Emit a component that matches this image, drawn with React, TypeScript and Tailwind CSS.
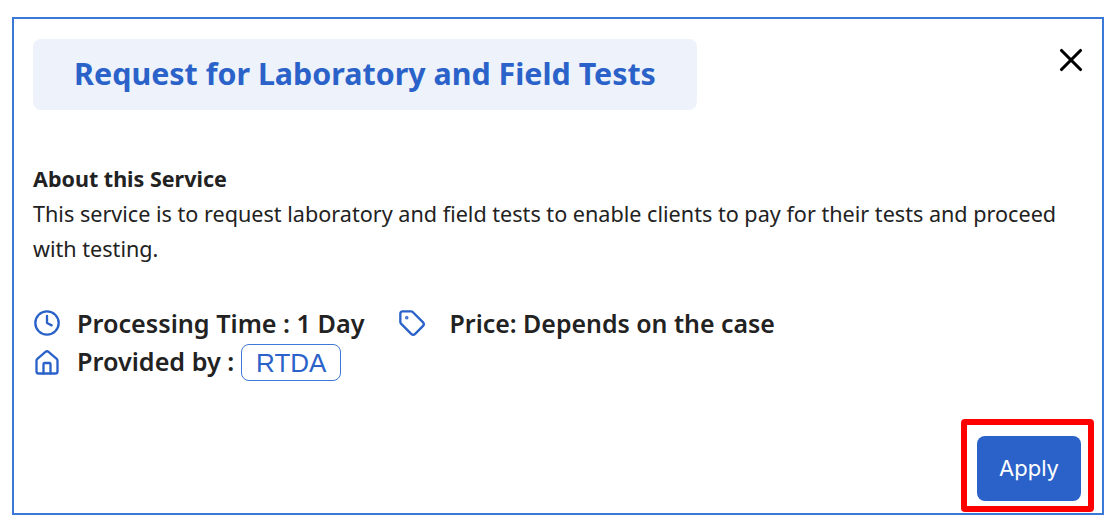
import { X, Clock, Tag, Home } from 'lucide-react';

export default function App() {
  return (
    <div className="w-[1110px] h-[524px] bg-white pl-3 pt-[17px] font-['Noto_Sans',sans-serif] text-[#222222]">
      <div className="relative w-[1092px] h-[498px] border-2 border-[#3b78d8] pl-[19px] pr-4 pt-5">
        <div className="flex items-start justify-between">
          <div className="w-[664px] h-[71px] rounded-lg bg-[#edf2fb] flex items-center justify-center">
            <h1 className="text-[30.4px] leading-[44px] -mt-[2px] font-bold text-[#2b62c9]">Request for Laboratory and Field Tests</h1>
          </div>
          <X className="h-[38px] w-[38px] mt-[2px] -mr-[4px] text-black" strokeWidth={2} />
        </div>

        <div className="mt-[52px] leading-[35px]">
          <h2 className="font-bold text-[21.5px] leading-[34px]">About this Service</h2>
          <p className="text-[21.6px]">
            This service is to request laboratory and field tests to enable clients to pay for their tests and proceed
            with testing.
          </p>
        </div>

        <div className="mt-[39px] flex flex-col gap-px text-[25.2px] leading-[36px] font-semibold">
          <div className="flex items-center">
            <Clock className="h-[28px] w-[28px] text-[#2b62c9]" strokeWidth={2} />
            <span className="ml-[16px]">Processing Time : 1 Day</span>
            <Tag className="ml-[33px] h-[28px] w-[28px] text-[#2b62c9]" strokeWidth={2} />
            <span className="ml-[24px] text-[24.9px]">Price: Depends on the case</span>
          </div>
          <div className="flex items-center h-[38px]">
            <Home className="h-[28px] w-[28px] mt-[4px] text-[#2b62c9]" strokeWidth={2} />
            <span className="ml-[16px]">Provided by :</span>
            <span className="ml-[7px] mt-[3px] h-[37px] w-[100px] rounded-lg border border-[#3b78d8] flex items-center justify-center font-['Liberation_Sans',sans-serif] text-[26px] font-normal text-[#2b62c9]">
              RTDA
            </span>
          </div>
        </div>

        <div className="absolute left-[947px] top-[400px] w-[133px] h-[93px] rounded-sm border-[6px] border-[#ff0000] pl-[10px] pt-[11px]">
          <button className="block w-[104px] h-[65px] rounded-lg bg-[#2b62c9] text-white font-['Inter',sans-serif] text-[22px]">Apply</button>
        </div>
      </div>
    </div>
  );
}
